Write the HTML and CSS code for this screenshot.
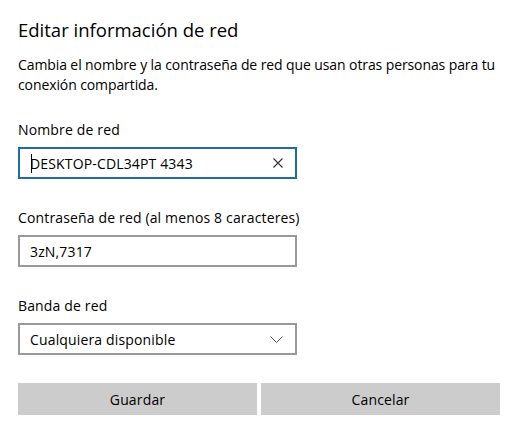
FILE: index.html
```html
<!DOCTYPE html>
<html lang="es">
<head>
<meta charset="utf-8">
<title>Editar información de red</title>
<link rel="stylesheet" href="styles.css">
</head>
<body>
<div class="page">
  <h1 class="title">Editar información de red</h1>
  <p class="desc">Cambia el nombre y la contraseña de red que usan otras personas para tu conexión compartida.</p>

  <div class="label first">Nombre de red</div>
  <div class="field focused">
    <span class="caret"></span><span class="value">DESKTOP-CDL34PT 4343</span>
    <svg class="icon clear" width="10" height="10" viewBox="0 0 10 10"><path d="M0.5 0.5L9.5 9.5M9.5 0.5L0.5 9.5" stroke="#333" stroke-width="1.1" fill="none"/></svg>
  </div>

  <div class="label">Contraseña de red (al menos 8 caracteres)</div>
  <div class="field">
    <span class="value">3zN,7317</span>
  </div>

  <div class="label">Banda de red</div>
  <div class="field">
    <span class="value">Cualquiera disponible</span>
    <svg class="icon chevron" width="13" height="7" viewBox="0 0 13 7"><path d="M0.5 0.5L6.5 6.5L12.5 0.5" stroke="#555" stroke-width="1" fill="none"/></svg>
  </div>

  <div class="buttons">
    <div class="btn">Guardar</div>
    <div class="btn">Cancelar</div>
  </div>
</div>
</body>
</html>
```

FILE: styles.css
```css
html, body {
  margin: 0;
  padding: 0;
  background: #fff;
}
body {
  font-family: "Open Sans", "Noto Sans", sans-serif;
  color: #000;
}
.page {
  width: 482px;
  padding: 16px 18px 0 18px;
}
.title {
  margin: 0;
  font-size: 18.5px;
  font-weight: 400;
  line-height: 28px;
}
.desc {
  margin: 11px 0 0 0;
  font-size: 14px;
  letter-spacing: -0.1px;
  line-height: 20px;
}
.label {
  margin-top: 29px;
  font-size: 14px;
  letter-spacing: 0.15px;
  line-height: 20px;
}
.label.first {
  margin-top: 25px;
}
.field {
  margin-top: 7px;
  box-sizing: border-box;
  width: 279px;
  height: 32px;
  border: 2px solid #999;
  display: flex;
  align-items: center;
  padding: 0 12px 0 10px;
  font-size: 14px;
  letter-spacing: 0.15px;
  position: relative;
}
.field.focused {
  border-color: #1f6ba5;
}
.value {
  flex: 1;
  white-space: nowrap;
}
.caret {
  position: absolute;
  left: 11px;
  top: 5px;
  width: 1px;
  height: 19px;
  background: #000;
}
.icon {
  flex: none;
}
.buttons {
  margin-top: 28px;
  display: grid;
  grid-template-columns: 1fr 1fr;
  gap: 4px;
}
.btn {
  height: 32px;
  background: #ccc;
  display: flex;
  align-items: center;
  justify-content: center;
  font-size: 14px;
  letter-spacing: 0.15px;
}
```
